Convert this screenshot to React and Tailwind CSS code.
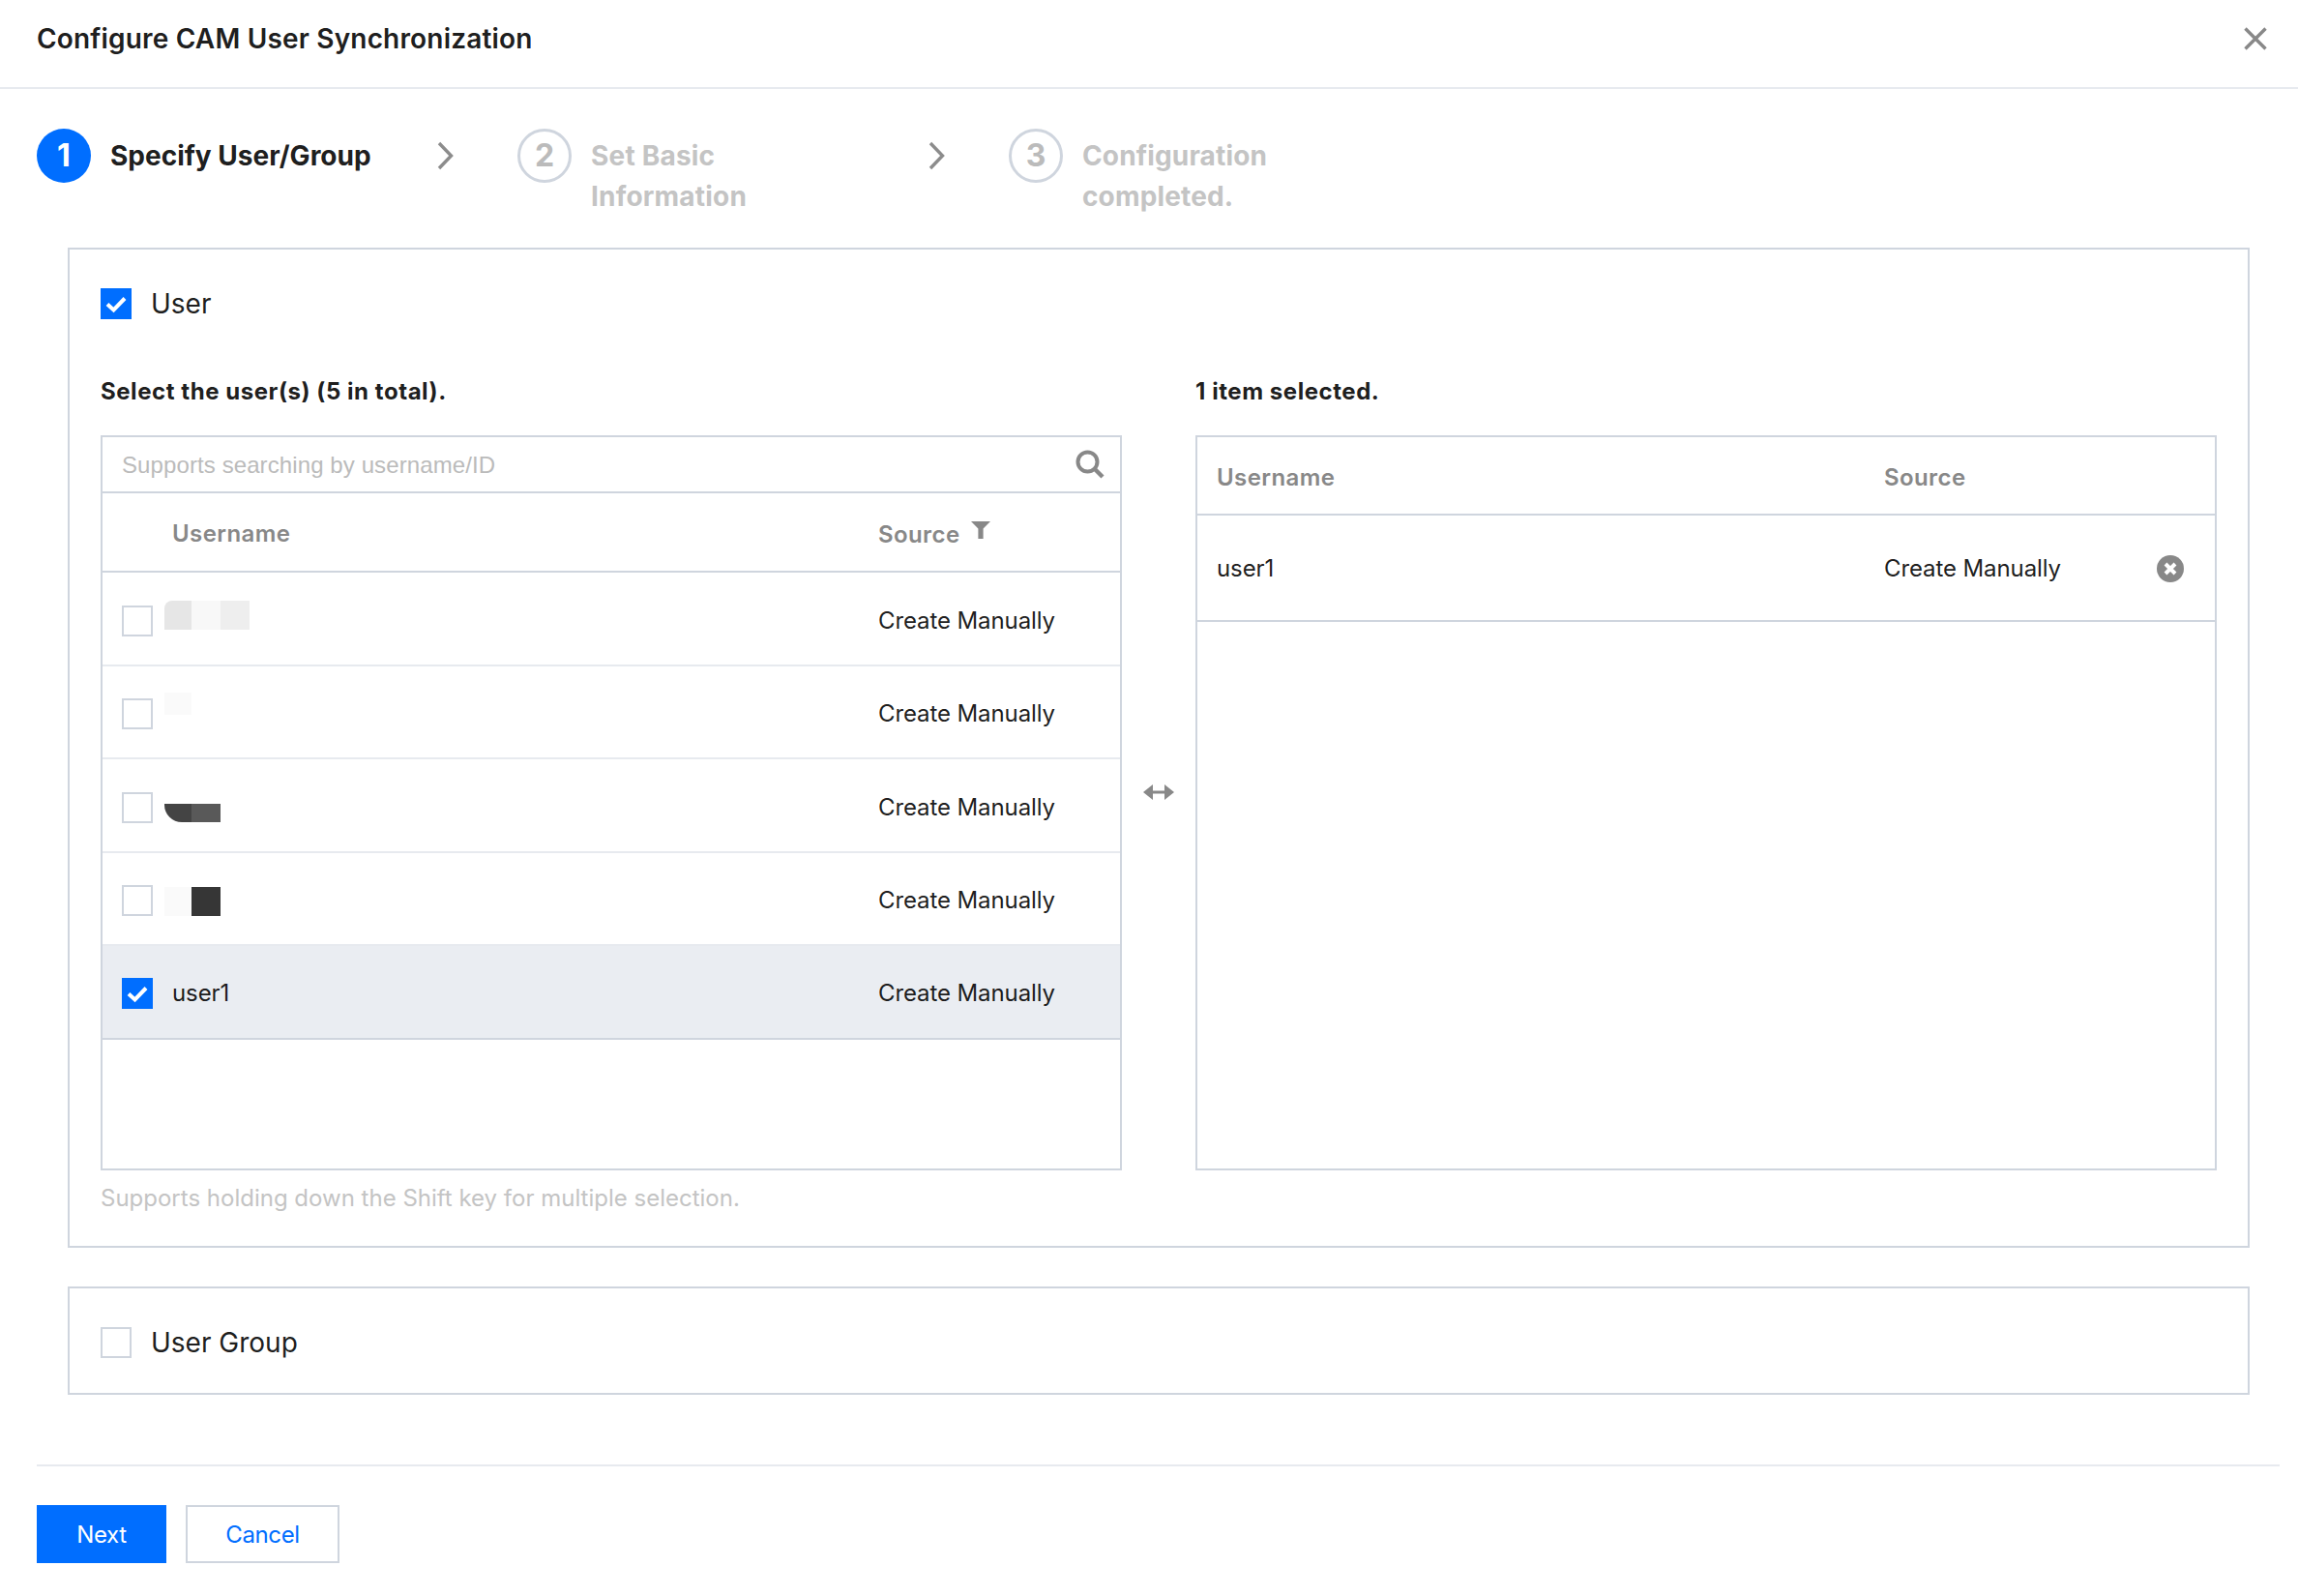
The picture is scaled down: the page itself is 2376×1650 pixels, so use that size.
import React from "react";

const Check = () => (
  <svg viewBox="0 0 32 32" className="w-full h-full">
    <path d="M7 16.5 L13.5 22.5 L25 10.5" fill="none" stroke="#fff" strokeWidth="4" />
  </svg>
);

const Box = ({ checked }) =>
  checked ? (
    <div className="w-8 h-8 bg-[#006eff] shrink-0"><Check /></div>
  ) : (
    <div className="w-8 h-8 bg-white border-2 border-[#cfd5de] shrink-0" />
  );

const Chevron = () => (
  <svg width="20" height="30" viewBox="0 0 20 30" className="shrink-0">
    <path d="M3 2 L15.5 15 L3 28" fill="none" stroke="#8c8c8c" strokeWidth="3.4" />
  </svg>
);

const Step = ({ n, text, active, w, tw }) => (
  <div className={`flex items-start ${w}`}>
    {active ? (
      <div className="w-14 h-14 rounded-full bg-[#006eff] text-white text-[32px] font-bold flex items-center justify-center shrink-0">{n}</div>
    ) : (
      <div className="w-14 h-14 rounded-full border-[3px] border-[#cfd5de] text-[#bbbbbb] text-[32px] font-bold flex items-center justify-center shrink-0">{n}</div>
    )}
    <div className={`ml-[20px] mt-[7px] text-[28px] leading-[42px] font-bold ${tw} ${active ? "text-[#000000e6]" : "text-[#c4c4c4]"}`}>{text}</div>
  </div>
);

const Mosaic = ({ i }) => {
  if (i === 0)
    return (
      <div className="flex h-[30px] -translate-y-[6px]">
        <div className="w-[28px] bg-[#e6e6e6] rounded-tl-[8px]" />
        <div className="w-[30px] bg-[#f8f8f8]" />
        <div className="w-[30px] bg-[#eeeeee]" />
      </div>
    );
  if (i === 1)
    return <div className="w-[28px] h-[23px] bg-[#fafafa] -translate-y-[11px]" />;
  if (i === 2)
    return (
      <div className="flex h-[19px] translate-y-[6px]">
        <div className="w-[28px] bg-[#444444] rounded-bl-[18px]" />
        <div className="w-[30px] bg-[#595959]" />
      </div>
    );
  return (
    <div className="flex h-[30px] translate-y-[1px]">
      <div className="w-[28px] bg-[#fafafa]" />
      <div className="w-[30px] bg-[#363636]" />
    </div>
  );
};

const rows = [0, 1, 2, 3];

export default function App() {
  return (
    <div className="w-[2376px] h-[1650px] bg-white overflow-hidden text-[#000000e6] font-['Inter','Noto_Sans',sans-serif]">
      <header className="h-[92px] border-b-2 border-[#e7eaef] flex items-center justify-between pl-[38px] pr-[32px] pb-[10px]">
        <div className="text-[28px] font-semibold tracking-[0.18px] leading-[40px]">Configure CAM User Synchronization</div>
        <svg width="24" height="24" viewBox="0 0 24 24">
          <path d="M1.5 1.5 L22.5 22.5 M22.5 1.5 L1.5 22.5" stroke="#888888" strokeWidth="3.4" fill="none" />
        </svg>
      </header>

      <div className="flex pl-[38px] pt-[41px] h-[164px]">
        <Step n="1" text="Specify User/Group" active w="w-[413px]" tw="w-[300px]" />
        <div className="w-[84px] pt-[13px]"><Chevron /></div>
        <Step n="2" text="Set Basic Information" w="w-[424px]" tw="w-[240px] tracking-[0.2px]" />
        <div className="w-[84px] pt-[13px]"><Chevron /></div>
        <Step n="3" text="Configuration completed." w="w-[400px]" tw="w-[240px] tracking-[0.15px]" />
      </div>

      <section className="ml-[70px] mr-[50px] h-[1034px] border-2 border-[#cfd5de] px-[32px] flex flex-col">
        <div className="h-[1030px]">
          <div className="flex items-center h-[32px] mt-[40px] gap-[20px]">
            <Box checked />
            <span className="text-[28px]">User</span>
          </div>
          <div className="flex mt-[57px]">
            <div className="w-[1056px]">
              <div className="text-[24px] font-bold leading-[36px] tracking-[0.55px] mb-[27px]">Select the user(s) (5 in total).</div>
              <div className="border-2 border-[#cfd5de] h-[760px]">
                <div className="h-[58px] border-b-2 border-[#cfd5de] flex items-center justify-between pl-[20px] pr-[16px]">
                  <span className="text-[24px] text-[#bbbbbb] tracking-[0.1px] font-['Liberation_Sans',sans-serif] translate-y-[1px]">Supports searching by username/ID</span>
                  <svg width="30" height="30" viewBox="0 0 30 30">
                    <circle cx="12.5" cy="12.5" r="10" fill="none" stroke="#888888" strokeWidth="4" />
                    <path d="M20 20 L28 28" stroke="#888888" strokeWidth="4.5" fill="none" />
                  </svg>
                </div>
                <div className="h-[82px] border-b-2 border-[#cfd5de] flex items-center text-[24px] font-semibold text-[#888888] tracking-[0.4px] pt-[3px]">
                  <div className="w-[72px]" />
                  <div className="w-[730px]">Username</div>
                  <div className="flex items-start pt-[2px]">
                    <span>Source</span>
                    <svg width="20" height="18" viewBox="0 0 20 18" className="ml-[11px] mt-[4px]">
                      <path d="M0 0 H20 L12.6 7.5 V18 H7.4 V7.5 Z" fill="#888888" />
                    </svg>
                  </div>
                </div>
                {rows.map((i) => (
                  <div key={i} className="h-[96.5px] border-b-2 border-[#e7eaef] flex items-center text-[24px] tracking-[-0.1px] pl-[20px] pt-[5px] last:border-0">
                    <Box />
                    <div className="w-[750px] pl-[12px]"><Mosaic i={i} /></div>
                    <span>Create Manually</span>
                  </div>
                ))}
                <div className="h-[96.5px] bg-[#eaedf2] border-b-2 border-[#cfd5de] flex items-center text-[24px] tracking-[-0.1px] pl-[20px] pt-[3px]">
                  <Box checked />
                  <div className="w-[750px] pl-[20px]">user1</div>
                  <span>Create Manually</span>
                </div>
              </div>
            </div>

            <div className="w-[76px] shrink-0 flex items-center justify-center pt-[40px]">
              <svg width="32" height="16" viewBox="0 0 32 16">
                <path d="M0 8 L10 0 V6.4 H22 V0 L32 8 L22 16 V9.6 H10 V16 Z" fill="#888888" />
              </svg>
            </div>

            <div className="w-[1056px]">
              <div className="text-[24px] font-bold leading-[36px] tracking-[0.55px] mb-[27px]">1 item selected.</div>
              <div className="border-2 border-[#cfd5de] h-[760px]">
                <div className="h-[81px] border-b-2 border-[#cfd5de] flex items-center text-[24px] font-semibold text-[#888888] tracking-[0.4px] pl-[20px] pt-[5px]">
                  <div className="w-[690px]">Username</div>
                  <div>Source</div>
                </div>
                <div className="h-[110px] border-b-2 border-[#cfd5de] flex items-center text-[24px] tracking-[-0.1px] pl-[20px] pt-[1px]">
                  <div className="w-[690px]">user1</div>
                  <div className="w-[282px]">Create Manually</div>
                  <svg width="28" height="28" viewBox="0 0 28 28">
                    <circle cx="14" cy="14" r="14" fill="#888888" />
                    <path d="M9 9 L19 19 M19 9 L9 19" stroke="#fff" strokeWidth="4" fill="none" />
                  </svg>
                </div>
              </div>
            </div>
          </div>
          <div className="text-[24px] text-[#c4c4c4] mt-[11px] leading-[36px]">Supports holding down the Shift key for multiple selection.</div>
        </div>
      </section>

      <section className="ml-[70px] mr-[50px] mt-[40px] h-[112px] border-2 border-[#cfd5de] px-[32px] pt-[3px] flex items-center gap-[20px]">
        <Box />
        <span className="text-[28px]">User Group</span>
      </section>

      <div className="ml-[38px] mr-[19px] mt-[72px] border-t-2 border-[#e7eaef] pt-[40px] flex gap-[20px]">
        <button className="w-[134px] h-[60px] pt-[2px] bg-[#006eff] text-white text-[24px] tracking-[-0.4px]">Next</button>
        <button className="w-[159px] h-[60px] pt-[2px] border-2 border-[#cfd5de] text-[#006eff] text-[24px] tracking-[-0.4px]">Cancel</button>
      </div>
    </div>
  );
}
